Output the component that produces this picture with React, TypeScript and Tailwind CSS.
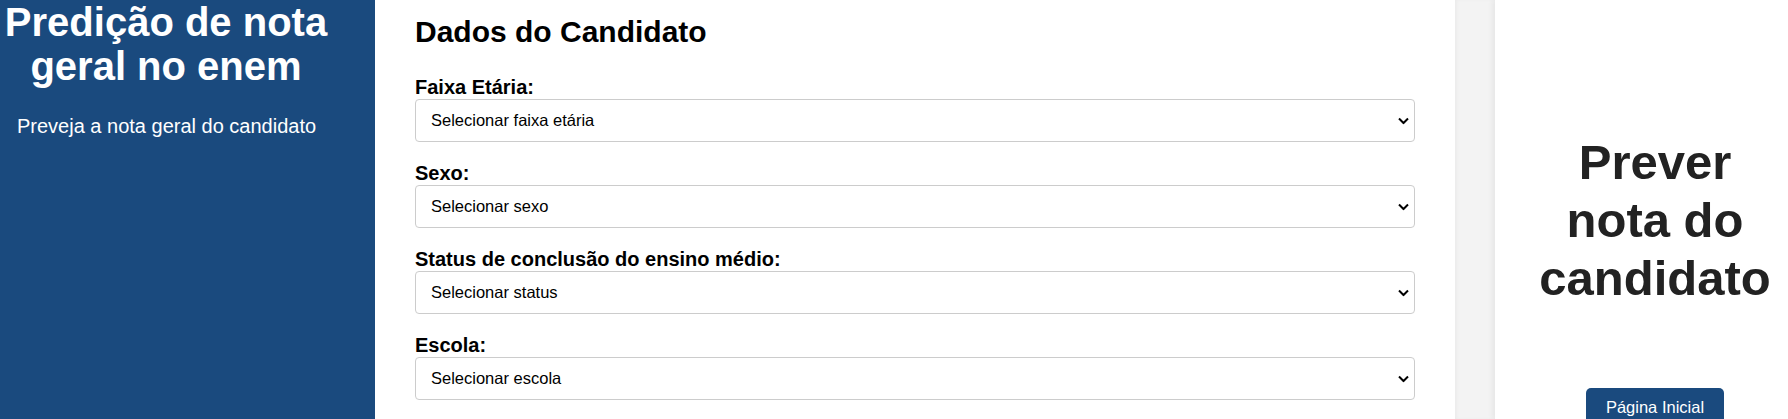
import React from "react";

const fields = [
  { label: "Faixa Etária:", placeholder: "Selecionar faixa etária" },
  { label: "Sexo:", placeholder: "Selecionar sexo" },
  { label: "Status de conclusão do ensino médio:", placeholder: "Selecionar status" },
  { label: "Escola:", placeholder: "Selecionar escola" },
];

function Chevron() {
  return (
    <svg
      className="pointer-events-none absolute right-[6px] top-1/2 -translate-y-1/2"
      width="11"
      height="7"
      viewBox="0 0 11 7"
      fill="none"
    >
      <polyline points="1,1 5.5,5.5 10,1" stroke="#000" strokeWidth="2" />
    </svg>
  );
}

export default function App() {
  return (
    <div
      className="flex h-[419px] w-[1788px] overflow-hidden bg-white"
      style={{ fontFamily: '"Liberation Sans", Arial, sans-serif' }}
    >
      <aside className="w-[375px] shrink-0 bg-[#1a4a7e] text-white">
        <h1 className="w-[332px] text-center text-[40px] font-bold leading-[44px]">
          Predição de nota geral no enem
        </h1>
        <p className="mt-[27px] pl-[17px] text-[20px] leading-[23px]">
          Preveja a nota geral do candidato
        </p>
      </aside>

      <main className="w-[1080px] shrink-0 bg-white px-10 pt-[15px] text-black">
        <h2 className="mb-[27px] text-[30px] font-bold leading-[34px]">Dados do Candidato</h2>
        {fields.map((f) => (
          <div key={f.label} className="mb-[20px]">
            <label className="block text-[20px] font-bold leading-[23px]">{f.label}</label>
            <div className="relative">
              <select
                defaultValue=""
                className="h-[43px] w-full appearance-none rounded-[4px] border border-[#cccccc] bg-white pl-[15px] text-[16.5px] text-black outline-none"
              >
                <option value="">{f.placeholder}</option>
              </select>
              <Chevron />
            </div>
          </div>
        ))}
      </main>

      <div className="w-[40px] shrink-0 bg-[#f3f3f3] shadow-[inset_2px_0_3px_rgba(0,0,0,0.03)]" />

      <section className="flex flex-1 flex-col items-center bg-white pl-[27px] pt-[133px] shadow-[-3px_0_5px_rgba(0,0,0,0.05)]">
        <h2 className="text-center text-[49px] font-bold leading-[58px] text-[#222222]">
          Prever
          <br />
          nota do
          <br />
          candidato
        </h2>
        <button className="mt-[81px] rounded-[5px] bg-[#1a4a7e] px-5 pb-[10px] pt-[10px] text-[16.5px] leading-[18px] text-white">
          Página Inicial
        </button>
      </section>
    </div>
  );
}
